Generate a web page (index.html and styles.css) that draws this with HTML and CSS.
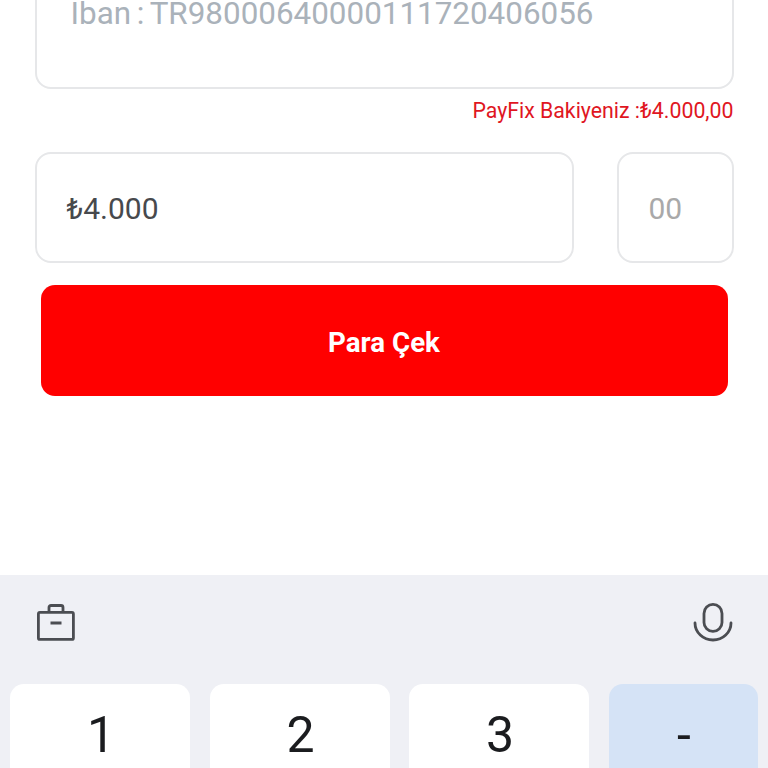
FILE: index.html
```html
<!DOCTYPE html>
<html lang="tr">
<head>
<meta charset="utf-8">
<title>Para Çek</title>
<link rel="stylesheet" href="styles.css">
</head>
<body>
<main class="form">
  <div class="field iban"><span class="iban-text">Iban : TR98000640000111720406056</span></div>
  <p class="balance">PayFix Bakiyeniz :₺4.000,00</p>
  <div class="amount-row">
    <div class="field amount">₺4.000</div>
    <div class="field cents">00</div>
  </div>
  <button class="submit" type="button">Para Çek</button>
</main>
<section class="keyboard">
  <div class="toolbar">
    <svg class="icon" width="40" height="40" viewBox="0 0 40 40" fill="none" stroke="#4b4d52" stroke-width="2.8">
      <rect x="2.4" y="9.4" width="35" height="27" rx="1.5"/>
      <path d="M13 9V4.5a2 2 0 0 1 2-2h10a2 2 0 0 1 2 2V9"/>
      <path d="M14.5 20h11" stroke-width="3"/>
    </svg>
    <svg class="icon" width="40" height="40" viewBox="0 0 40 40" fill="none" stroke="#4b4d52" stroke-width="2.8">
      <rect x="11" y="1.4" width="18" height="27" rx="9"/>
      <path d="M2 20a18 17 0 0 0 36 0" stroke-linecap="round"/>
    </svg>
  </div>
  <div class="keys">
    <div class="key">1</div>
    <div class="key">2</div>
    <div class="key">3</div>
    <div class="key key-fn">-</div>
  </div>
</section>
</body>
</html>
```
FILE: styles.css
```css
* { box-sizing: border-box; }
html, body { margin: 0; padding: 0; }
body {
  width: 768px;
  height: 768px;
  overflow: hidden;
  background: #fff;
  font-family: Roboto, "DejaVu Sans", sans-serif;
  display: flex;
  flex-direction: column;
}
.form {
  height: 575px;
  padding: 0 34.5px;
  flex: none;
  display: flex;
  flex-direction: column;
  overflow: hidden;
}
.field {
  border: 2px solid #e6e7e9;
  border-radius: 16px;
  background: #fff;
}
.iban {
  height: 129px;
  margin-top: -40px;
  flex: none;
  padding: 39px 0 0 34px;
}
.iban-text {
  display: block;
  font-size: 31.4px;
  line-height: 26px;
  word-spacing: -2px;
  color: #aab2ba;
  white-space: nowrap;
}
.balance {
  margin: 9px 0 0;
  text-align: right;
  font-size: 21.3px;
  line-height: 26px;
  color: #e0161f;
}
.amount-row {
  display: flex;
  gap: 43px;
  margin-top: 28px;
}
.amount, .cents {
  height: 111px;
  display: flex;
  align-items: center;
  padding-top: 2px;
  font-size: 30px;
}
.amount {
  flex: 1;
  padding-left: 30px;
  color: #47494d;
}
.cents {
  width: 117px;
  padding-left: 30px;
  color: #a9a9a9;
}
.submit {
  display: block;
  width: 687px;
  height: 111px;
  margin: 22px 0 0 6px;
  padding-top: 4px;
  border: 0;
  border-radius: 14px;
  background: #ff0000;
  color: #fff;
  font: 700 27.7px Roboto, sans-serif;
}
.keyboard {
  flex: 1;
  background: #eff0f5;
}
.toolbar {
  height: 109px;
  display: flex;
  justify-content: space-between;
  padding: 28px 35px 0 36px;
}
.keys {
  display: flex;
  padding-left: 10px;
}
.key {
  width: 180px;
  height: 120px;
  margin-right: 19.5px;
  padding: 22px 0 0 2px;
  flex: none;
  border-radius: 14px;
  background: #fff;
  color: #1b1c1f;
  font-size: 50px;
  line-height: 58px;
  text-align: center;
}
.key-fn {
  width: 149px;
  margin: 0;
  background: #d5e3f6;
}
```
